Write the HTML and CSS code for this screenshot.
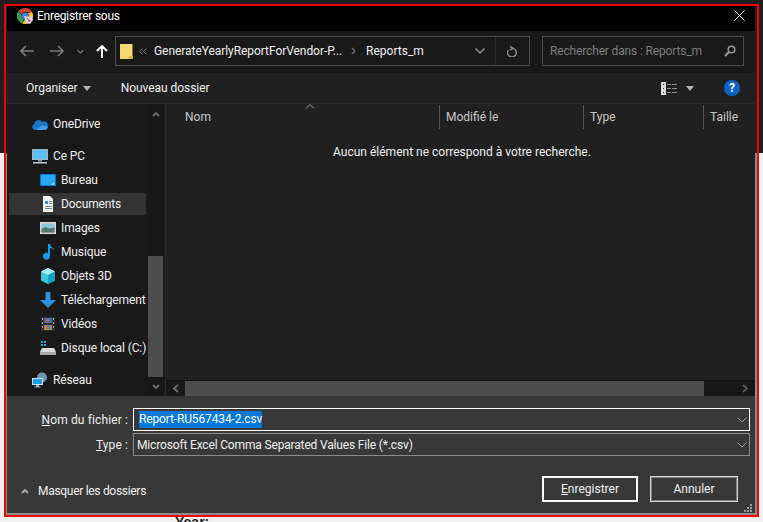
FILE: index.html
```html
<!DOCTYPE html>
<html lang="fr">
<head>
    <meta charset="UTF-8">
    <title>Enregistrer sous</title>
    <link rel="stylesheet" href="styles.css">
</head>
<body>

    <div class="frame">
        <div class="window">

            <div class="titlebar">
                <svg class="app-icon" width="16" height="16" viewBox="0 0 16 16">
                    <path d="M8 0a8 8 0 0 1 7 4H8a4 4 0 0 0-3.6 2.2L1.7 2.8A8 8 0 0 1 8 0z" fill="#d9403a"/>
                    <path d="M1.7 2.8l3 4.6a4 4 0 0 0 2.2 4.4L5 15.4A8 8 0 0 1 1.7 2.8z" fill="#3a9b4c"/>
                    <path d="M15 4a8 8 0 0 1-7 12l-3-.6 3-4a4 4 0 0 0 2.800-6.400z" fill="#f2c230"/>
                    <circle cx="8" cy="8" r="3.400" fill="#3f7fe6"/>
                    <path d="M7 8l8 1 1 3-3 4-4-1z" fill="#d8d8ec"/>
                    <path d="M9 9l5 4-2 1z" fill="#d0506e"/>
                </svg>
                <span class="title">Enregistrer sous</span>
                <svg class="close" width="11" height="11" viewBox="0 0 11 11"><path d="M.5.500l10 10M10.500.500l-10 10" stroke="#fff" fill="none"/></svg>
            </div>

            <div class="addressbar">
                <svg class="nav-back" width="14" height="12" viewBox="0 0 14 12"><path d="M6 1L1 6l5 5M1 6h13" stroke="#7d7d7d" stroke-width="1.600" fill="none"/></svg>
                <svg class="nav-forward" width="14" height="12" viewBox="0 0 14 12"><path d="M8 1l5 5-5 5M13 6H0" stroke="#7d7d7d" stroke-width="1.600" fill="none"/></svg>
                <svg class="nav-down" width="7" height="5" viewBox="0 0 7 5"><path d="M.5 1l3 3 3-3" stroke="#6a6a6a" stroke-width="1.500" fill="none"/></svg>
                <svg class="nav-up" width="12" height="13" viewBox="0 0 12 13"><path d="M1 6l5-5 5 5M6 1v12" stroke="#fff" stroke-width="2" fill="none"/></svg>

                <div class="path">
                    <svg class="folder" width="13" height="16" viewBox="0 0 13 16">
                        <path d="M0 1h12.500v15H0z" fill="#f7d774"/>
                        <path d="M9 16v-3h4v3z" fill="#dcae45"/>
                    </svg>
                    <svg class="crumb-more" width="8" height="7" viewBox="0 0 8 7"><path d="M3.500.500l-3 3 3 3M7.500.500l-3 3 3 3" stroke="#777" fill="none"/></svg>
                    <span class="crumb">GenerateYearlyReportForVendor-P...</span>
                    <svg class="crumb-sep" width="5" height="8" viewBox="0 0 5 8"><path d="M1 1l3 3-3 3" stroke="#777" stroke-width="1.200" fill="none"/></svg>
                    <span class="crumb">Reports_m</span>
                    <svg class="path-chevron" width="10" height="6" viewBox="0 0 10 6"><path d="M.5.500L5 5 9.500.500" stroke="#8d8d8d" stroke-width="1.500" fill="none"/></svg>
                    <div class="refresh">
                        <svg width="11" height="12" viewBox="0 0 11 12"><path d="M3 1.500l3 1.800-3 1.700M5 3.200a4.400 4.400 0 1 1-3.800 2" stroke="#8a8a8a" stroke-width="1.500" fill="none"/></svg>
                    </div>
                </div>

                <div class="search">
                    <span class="search-text">Rechercher dans : Reports_m</span>
                    <svg width="12" height="12" viewBox="0 0 12 12"><circle cx="7.500" cy="4.500" r="3.300" stroke="#9a9a9a" stroke-width="1.500" fill="none"/><path d="M5 7l-4 4" stroke="#9a9a9a" stroke-width="2"/></svg>
                </div>
            </div>

            <div class="toolbar">
                <span class="organiser">Organiser</span>
                <span class="caret"></span>
                <span class="new-folder">Nouveau dossier</span>
                <svg class="view-icon" width="16" height="13" viewBox="0 0 16 13">
                    <path d="M0 0h5v13H0z" fill="#d8d8d8"/>
                    <path d="M2 2h1v1H2zM2 6h1v1H2zM2 10h1v1H2z" fill="#333"/>
                    <path d="M6 2h4v1H6zM11 2h5v1h-5zM6 6h4v1H6zM11 6h5v1h-5zM6 10h4v1H6zM11 10h5v1h-5z" fill="#8f8f8f"/>
                </svg>
                <span class="caret view-caret"></span>
                <span class="help">?</span>
            </div>

            <div class="content">
                <div class="sidebar">
                    <div class="tree">
                        <div class="item top">
                            <svg width="16" height="16" viewBox="0 0 16 16"><path d="M3 14a3 3 0 0 1-.5-5.900 4 4 0 0 1 7.500-2A3.500 3.500 0 0 1 15.500 10 3 3 0 0 1 13 14z" fill="#1a76c9"/><path d="M3 14h10a3 3 0 0 0 2.500-4l-6-.5-3 2z" fill="#3a9be8"/></svg>
                            <span>OneDrive</span>
                        </div>
                        <div class="item top group">
                            <svg width="16" height="16" viewBox="0 0 16 16"><path d="M0 1h16v11H0z" fill="#9fb2bd"/><path d="M1 2h14v9H1z" fill="#5cc0f5"/><path d="M6 12h4v1.500H6z" fill="#8b9aa3"/><path d="M1 14h14v1.500H1z" fill="#c9d2d8"/></svg>
                            <span>Ce PC</span>
                        </div>
                        <div class="item">
                            <svg width="16" height="16" viewBox="0 0 16 16"><path d="M0 2h16v12H0z" fill="#0a74d4"/><path d="M1 3h14v10H1z" fill="#29a6f5"/><path d="M11 13l3-3v3z" fill="#9adcff"/></svg>
                            <span>Bureau</span>
                        </div>
                        <div class="item selected">
                            <svg width="16" height="16" viewBox="0 0 16 16"><path d="M3 0h7l3 3v13H3z" fill="#f2f2f2"/><path d="M5 5h3v3H5z" fill="#3a8fd0"/><path d="M9 5h3v1H9zM9 7h3v1H9zM5 10h7v1H5zM5 12h7v1H5z" fill="#5b8db0"/></svg>
                            <span>Documents</span>
                        </div>
                        <div class="item">
                            <svg width="16" height="16" viewBox="0 0 16 16"><path d="M0 2h16v12H0z" fill="#d6d6d6"/><path d="M1.500 3.500h13v9h-13z" fill="#8fc4dc"/><path d="M1.500 9l4-2 4 1.500 5-1v5h-13z" fill="#56786e"/></svg>
                            <span>Images</span>
                        </div>
                        <div class="item">
                            <svg width="16" height="16" viewBox="0 0 16 16"><path d="M8 0h2c0 3 4 3 4 7-1-2-2-3-4-3v8a3.500 3.500 0 1 1-2-3z" fill="#1a9be8"/></svg>
                            <span>Musique</span>
                        </div>
                        <div class="item">
                            <svg width="16" height="16" viewBox="0 0 16 16"><path d="M8 0l7 3.500v9L8 16l-7-3.500v-9z" fill="#3cc6d8"/><path d="M8 0l7 3.500L8 7 1 3.500z" fill="#a8eef0"/><path d="M8 7l7-3.500v9L8 16z" fill="#1aa3c0"/></svg>
                            <span>Objets 3D</span>
                        </div>
                        <div class="item">
                            <svg width="16" height="16" viewBox="0 0 16 16"><path d="M5.500 0h5v8H16l-8 8-8-8h5.500z" fill="#2a90e0"/></svg>
                            <span>Téléchargements</span>
                        </div>
                        <div class="item">
                            <svg width="16" height="16" viewBox="0 0 16 16"><path d="M1 1h14v14H1z" fill="#2b3038"/><path d="M4 2h8v5H4z" fill="#3c6fb0"/><path d="M4 9h8v5H4z" fill="#b8803a"/><path d="M6 3h3v3H6z" fill="#d05a3a"/><path d="M7 10h3v3H7z" fill="#3a8fd0"/><path d="M2 2h1v2H2zM2 6h1v2H2zM2 10h1v2H2zM13 2h1v2h-1zM13 6h1v2h-1zM13 10h1v2h-1z" fill="#a8a8a8"/></svg>
                            <span>Vidéos</span>
                        </div>
                        <div class="item">
                            <svg width="16" height="16" viewBox="0 0 16 16"><path d="M1 1h2v2H1zM4 1h2v2H4zM1 4h2v2H1zM4 4h2v2H4z" fill="#1ea7f0"/><path d="M2 8h12l2 4v3H0v-3z" fill="#d8d8d8"/><path d="M0 12h16v3H0z" fill="#a9a9a9"/><path d="M12 13h2v1h-2z" fill="#63d44a"/></svg>
                            <span>Disque local (C:)</span>
                        </div>
                        <div class="item top group">
                            <svg width="16" height="16" viewBox="0 0 16 16"><circle cx="10" cy="5.500" r="5" fill="#6f93b5"/><path d="M0 6h11v7H0z" fill="#c9e3f5"/><path d="M1 7h9v5H1z" fill="#1e9ce8"/><path d="M4 13h3v1.500H4zM2.500 14.500h6v1h-6z" fill="#9fb2bd"/></svg>
                            <span>Réseau</span>
                        </div>
                    </div>
                    <div class="vscroll">
                        <div class="scroll-btn"><svg width="8" height="6" viewBox="0 0 8 6"><path d="M1 5l3-3 3 3" stroke="#6e6e6e" stroke-width="1.800" fill="none"/></svg></div>
                        <div class="vscroll-track"></div>
                        <div class="vscroll-thumb"></div>
                        <div class="scroll-btn"><svg width="8" height="6" viewBox="0 0 8 6"><path d="M1 1l3 3 3-3" stroke="#6e6e6e" stroke-width="1.800" fill="none"/></svg></div>
                    </div>
                </div>

                <div class="main">
                    <div class="columns">
                        <div class="col col-name">Nom<svg class="sort" width="10" height="5" viewBox="0 0 10 5"><path d="M1 4.500l4-4 4 4" stroke="#9a9a9a" fill="none"/></svg></div>
                        <div class="col col-date">Modifié le</div>
                        <div class="col col-type">Type</div>
                        <div class="col col-size">Taille</div>
                    </div>
                    <div class="empty">Aucun élément ne correspond à votre recherche.</div>
                    <div class="hscroll">
                        <div class="hscroll-btn"><svg width="7" height="9" viewBox="0 0 7 9"><path d="M6 1L2 4.500 6 8" stroke="#6e6e6e" stroke-width="1.800" fill="none"/></svg></div>
                        <div class="hscroll-thumb"></div>
                        <div class="hscroll-btn end"><svg width="7" height="9" viewBox="0 0 7 9"><path d="M1 1l4 3.500L1 8" stroke="#5a5a5a" stroke-width="1.800" fill="none"/></svg></div>
                    </div>
                </div>
            </div>

            <div class="footer">
                <div class="field-row">
                    <label class="field-label"><u>N</u>om du fichier :</label>
                    <div class="field focused">
                        <span class="selection">Report-RU567434-2.csv</span>
                        <svg class="field-chevron" width="10" height="6" viewBox="0 0 10 6"><path d="M.5.500L5 5 9.500.500" stroke="#9a9a9a" fill="none"/></svg>
                    </div>
                </div>
                <div class="field-row">
                    <label class="field-label"><u>T</u>ype :</label>
                    <div class="field">
                        <span class="field-value">Microsoft Excel Comma Separated Values File (*.csv)</span>
                        <svg class="field-chevron" width="10" height="6" viewBox="0 0 10 6"><path d="M.5.500L5 5 9.500.500" stroke="#9a9a9a" fill="none"/></svg>
                    </div>
                </div>
                <div class="actions">
                    <svg class="hide-chevron" width="8" height="6" viewBox="0 0 8 6"><path d="M1 5l3-3 3 3" stroke="#b0b0b0" stroke-width="1.800" fill="none"/></svg>
                    <span class="hide-text">Masquer les dossiers</span>
                    <button class="btn btn-default"><u>E</u>nregistrer</button>
                    <button class="btn btn-cancel">Annuler</button>
                </div>
                <svg class="grip" width="8" height="8" viewBox="0 0 8 8"><path d="M6 0h2v2H6zM3 3h2v2H3zM6 3h2v2H6zM0 6h2v2H0zM3 6h2v2H3zM6 6h2v2H6z" fill="#a0a0a0"/></svg>
            </div>

        </div>
    </div>

    <div class="behind">Year:</div>

</body>
</html>
```

FILE: styles.css
```css
html, body {
    height: 100%;
}

body {
    margin: 0;
    height: 522px;
    overflow: hidden;
    font-family: Roboto, "Noto Sans", sans-serif;
    font-size: 12px;
    color: #f0f0f0;
    background: linear-gradient(#1f1f1f 153px, #f0f0f0 153px);
}

.frame {
    box-sizing: border-box;
    width: 755px;
    height: 513px;
    margin: 4px 0 0 4px;
    border: 2px solid #f00000;
}

/* the gradient shows through the padding as the window's light edge */
.window {
    box-sizing: border-box;
    height: 509px;
    padding: 0 2px 2px 1px;
    display: flex;
    flex-direction: column;
    background: linear-gradient(#222 147px, #8c8c8c 147px);
}

.titlebar {
    box-sizing: border-box;
    height: 25px;
    flex: none;
    display: flex;
    align-items: center;
    padding: 0 0 5px 10px;
    background: #000;
}

.title {
    margin-left: 4px;
    letter-spacing: -0.25px;
    color: #fff;
}

.close {
    margin-left: auto;
    margin-right: 10px;
    margin-bottom: 1px;
}

.addressbar {
    box-sizing: border-box;
    height: 42px;
    flex: none;
    display: flex;
    align-items: center;
    padding-bottom: 2px;
    background: #191919;
}

.nav-back {
    margin-left: 13px;
}

.nav-forward {
    margin-left: 16px;
}

.nav-down {
    margin-left: 13px;
}

.nav-up {
    margin-left: 12px;
}

.path {
    box-sizing: border-box;
    width: 415px;
    height: 30px;
    margin-left: 7px;
    display: flex;
    align-items: center;
    padding-left: 4px;
    border: 1px solid #4e4e4e;
}

.crumb-more {
    margin-left: 6px;
}

.crumb {
    color: #f0f0f0;
}

.crumb-more + .crumb {
    margin-left: 7px;
    letter-spacing: -0.06px;
}

.crumb-sep {
    margin: 0 10px 0 9px;
}

.path-chevron {
    margin-left: auto;
}

.refresh {
    width: 33px;
    height: 28px;
    margin-left: 10px;
    display: flex;
    align-items: center;
    justify-content: center;
    border-left: 1px solid #2c2c2c;
}

.search {
    box-sizing: border-box;
    width: 202px;
    height: 30px;
    margin-left: 12px;
    display: flex;
    align-items: center;
    justify-content: space-between;
    padding: 0 7px 0 7px;
    border: 1px solid #4e4e4e;
}

.search-text {
    color: #7f7f7f;
    letter-spacing: -0.15px;
}

.toolbar {
    height: 30px;
    flex: none;
    display: flex;
    align-items: center;
    background: #202020;
}

.organiser {
    margin-left: 19px;
}

.caret {
    width: 0;
    height: 0;
    margin-left: 5px;
    border-left: 4px solid transparent;
    border-right: 4px solid transparent;
    border-top: 5px solid #b4b4b4;
}

.new-folder {
    margin-left: 30px;
    letter-spacing: -0.05px;
}

.view-icon {
    margin-left: auto;
}

.view-caret {
    margin-left: 9px;
}

.help {
    width: 16px;
    height: 16px;
    margin: 0 15px 0 30px;
    border-radius: 50%;
    background: #0a63c4;
    color: #fff;
    font-weight: 700;
    font-size: 12px;
    line-height: 16px;
    text-align: center;
}

.content {
    height: 293px;
    flex: none;
    display: flex;
    background: #202020;
}

.sidebar {
    width: 159px;
    flex: none;
    display: flex;
    background: #191919;
    border-right: 1px solid #2a2a2a;
    border-top: 1px solid #2a2a2a;
    box-sizing: border-box;
}

.tree {
    width: 141px;
    flex: none;
    padding-top: 8px;
    overflow: hidden;
}

.item {
    box-sizing: border-box;
    width: 137px;
    height: 24px;
    margin-left: 2px;
    padding-left: 31px;
    display: flex;
    align-items: center;
    gap: 5px;
    white-space: nowrap;
    overflow: hidden;
    letter-spacing: -0.12px;
}

.item svg {
    flex: none;
}

.item.top {
    padding-left: 23px;
}

.item.group {
    margin-top: 8px;
}

.item.selected {
    background: #333;
    box-shadow: inset 0 1px 0 #191919, inset 0 -1px 0 #191919;
}

.vscroll {
    width: 15px;
    flex: none;
    display: flex;
    flex-direction: column;
    background: #171717;
}

.scroll-btn {
    height: 19px;
    flex: none;
    display: flex;
    align-items: center;
    justify-content: center;
}

.vscroll-track {
    height: 133px;
    flex: none;
}

.vscroll-thumb {
    height: 121px;
    flex: none;
    background: #4d4d4d;
}

.main {
    flex: 1;
    min-width: 0;
    display: flex;
    flex-direction: column;
}

.columns {
    height: 26px;
    flex: none;
    display: flex;
    box-sizing: border-box;
    padding-top: 1px;
    border-top: 1px solid #2a2a2a;
    color: #c8c8c8;
}

.col {
    box-sizing: border-box;
    padding-left: 6px;
    line-height: 24px;
    border-right: 1px solid #555;
}

.col-name {
    width: 274px;
    padding-left: 19px;
    position: relative;
}

.sort {
    position: absolute;
    left: 139px;
    top: -1px;
}

.col-date {
    width: 144px;
}

.col-type {
    width: 120px;
}

.col-size {
    flex: 1;
    border-right: 0;
}

.empty {
    flex: 1;
    padding: 13px 0 0 3px;
    line-height: 20px;
    text-align: center;
}

.hscroll {
    box-sizing: border-box;
    height: 16px;
    flex: none;
    display: flex;
    background: #171717;
    border-top: 1px solid #111;
}

.hscroll-btn {
    width: 19px;
    flex: none;
    display: flex;
    align-items: center;
    justify-content: center;
}

.hscroll-btn.end {
    margin-left: auto;
}

.hscroll-thumb {
    width: 519px;
    flex: none;
    background: #4d4d4d;
}

.footer {
    position: relative;
    height: 117px;
    flex: none;
    box-sizing: border-box;
    padding-top: 12px;
    background: #383838;
}

.field-row {
    display: flex;
    align-items: center;
    margin-bottom: 2px;
}

.field-label {
    width: 121px;
    text-align: right;
    letter-spacing: 0.12px;
}

.field {
    box-sizing: border-box;
    width: 617px;
    height: 23px;
    margin-left: 5px;
    padding-left: 3px;
    display: flex;
    align-items: center;
    border: 1px solid #8c8c8c;
}

.field.focused {
    border-color: #fff;
    padding-left: 5px;
}

.selection {
    background: #0078d7;
    color: #fff;
    line-height: 17px;
    letter-spacing: -0.14px;
}

.field-value {
    letter-spacing: -0.16px;
}

.field-chevron {
    margin-left: auto;
    margin-right: 2px;
}

.actions {
    display: flex;
    align-items: center;
    height: 26px;
    margin-top: 20px;
    padding: 0 17px 0 14px;
}

.hide-chevron {
    margin-top: 4px;
}

.hide-text {
    margin: 4px 0 0 9px;
    letter-spacing: -0.3px;
}

.btn {
    box-sizing: border-box;
    height: 26px;
    padding: 0;
    background: #383838;
    color: #f0f0f0;
    font: inherit;
}

.btn-default {
    width: 96px;
    margin-left: auto;
    border: 2px solid #fff;
}

.btn-cancel {
    width: 88px;
    margin-left: 12px;
    border: 1px solid #d8d8d8;
    box-shadow: inset 0 0 0 1px #7c7c7c;
}

.grip {
    position: absolute;
    right: 3px;
    bottom: 1px;
}

.behind {
    margin: 0 0 0 175px;
    font-family: "Liberation Sans", sans-serif;
    font-size: 14px;
    font-weight: 700;
    line-height: 10px;
    color: #222;
}
```
